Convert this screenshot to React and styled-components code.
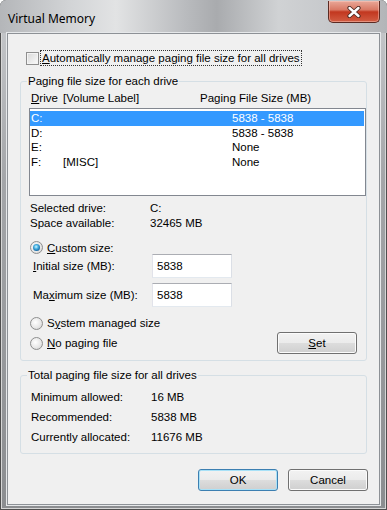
import React from "react";
import styled, { createGlobalStyle } from "styled-components";

const GlobalStyle = createGlobalStyle`
  html, body {
    margin: 0;
    padding: 0;
    background: #fff;
  }
  body {
    font-family: "Liberation Sans", Arial, sans-serif;
    font-size: 11.5px;
    color: #000;
  }
`;

const Window = styled.div`
  width: 387px;
  height: 510px;
  box-sizing: border-box;
  display: flex;
  flex-direction: column;
  padding: 0 7px 5px 7px;
  border-radius: 6px 6px 0 0;
  background: linear-gradient(to bottom, #c9cbce 0%, #a4a6a9 35%, #8b8d90 100%);
  box-shadow: inset 0 0 0 1px #4f4f4f, inset 0 0 0 2px #d6d6d6;
`;

const TitleBar = styled.div`
  height: 33px;
  margin: 0 -7px;
  padding: 0 7px;
  display: flex;
  justify-content: space-between;
  align-items: flex-start;
  border-radius: 6px 6px 0 0;
  background: linear-gradient(
    to right,
    #b4b6b9 0%,
    #d2d4d6 18%,
    #e2e3e4 30%,
    #b9bbbe 48%,
    #a9abae 56%,
    #d0d2d4 72%,
    #c6c8cb 86%,
    #b3b5b8 100%
  );
`;

const Title = styled.span`
  font-family: "Noto Sans", "Open Sans", sans-serif;
  font-size: 12px;
  padding: 6px 0 0 1px;
  line-height: 26px;
  color: #000;
`;

const CloseButton = styled.div`
  width: 52px;
  height: 22px;
  margin-top: 1px;
  box-sizing: border-box;
  border: 1px solid #5b2a22;
  border-top: none;
  border-radius: 0 0 5px 5px;
  background: linear-gradient(#e9a898 0%, #d97864 42%, #c2371f 52%, #d25d43 100%);
  box-shadow: inset 0 0 0 1px rgba(255, 210, 200, 0.45);
  display: flex;
  align-items: center;
  justify-content: center;
`;

const Client = styled.div`
  flex: 1;
  display: flex;
  flex-direction: column;
  background: #f0f0f0;
  border: 1px solid #8d9196;
  box-shadow: 0 0 0 1px #e6e8ea;
  padding: 16px 12px 0 12px;
`;

const CheckRow = styled.div`
  display: flex;
  align-items: center;
  gap: 2px;
  height: 16px;
  margin-left: 6px;
`;

const CheckBox = styled.span`
  width: 13px;
  height: 13px;
  box-sizing: border-box;
  border: 1px solid #8f8f8f;
  background: linear-gradient(135deg, #d8d8d8, #fbfbfb);
  box-shadow: inset 0 0 0 1px #f4f4f4;
`;

const FocusText = styled.span`
  outline: 1px dotted #333;
  padding: 0 1px;
  line-height: 14px;
`;

const Group = styled.fieldset`
  margin: ${(p) => p.$top}px 0 0 0;
  padding: 0 0 6px 8px;
  border: 1px solid #d5dfe5;
  border-radius: 3px;
  min-width: 0;
`;

const Legend = styled.legend`
  padding: 0 1px;
  margin-left: -2px;
  line-height: 14px;
`;

const ListHeader = styled.div`
  display: grid;
  grid-template-columns: 32px 137px 1fr;
  padding-left: 2px;
  margin-top: 3px;
  line-height: 14px;
`;

const ListBox = styled.div`
  margin-top: 3px;
  height: 88px;
  box-sizing: border-box;
  border: 1px solid #828790;
  background: #fff;
  padding: 2px 1px 0 0;
`;

const ListRow = styled.div`
  display: grid;
  grid-template-columns: 32px 169px 1fr;
  height: 14.5px;
  line-height: 14.5px;
  padding-left: 1px;
  background: ${(p) => (p.$selected ? "#3399ff" : "transparent")};
  color: ${(p) => (p.$selected ? "#fff" : "#000")};
`;

const InfoGrid = styled.div`
  display: grid;
  grid-template-columns: 120px 1fr;
  padding-left: ${(p) => p.$pad}px;
  margin-top: ${(p) => p.$top}px;
  line-height: ${(p) => p.$line}px;
`;

const RadioRow = styled.div`
  display: flex;
  align-items: center;
  gap: 4px;
  height: 13px;
  padding-left: 1px;
  margin-top: ${(p) => p.$top}px;
`;

const Radio = styled.span`
  width: 13px;
  height: 13px;
  box-sizing: border-box;
  border-radius: 50%;
  border: 1px solid #8e8f8f;
  background: radial-gradient(circle at 40% 40%, #ffffff 0%, #e8e8e8 55%, #cbcbcb 100%);
  display: flex;
  align-items: center;
  justify-content: center;
  &::after {
    content: "";
    display: ${(p) => (p.$checked ? "block" : "none")};
    width: 7px;
    height: 7px;
    border-radius: 50%;
    background: radial-gradient(circle at 45% 40%, #d2f4ff 0%, #49b3e3 35%, #176aa6 70%, #0d3f6b 100%);
  }
`;

const SizeRow = styled.div`
  display: flex;
  align-items: center;
  height: 24px;
  margin: ${(p) => p.$top}px 0 0 4px;
`;

const SizeLabel = styled.span`
  width: 119px;
`;

const TextBox = styled.input`
  width: 80px;
  height: 24px;
  box-sizing: border-box;
  margin: 0;
  padding: 0 0 0 4px;
  font: inherit;
  color: #000;
  background: #fff;
  border: 1px solid #abadb3;
  border-color: #abadb3 #dbdfe6 #e3e9ef #e2e3ea;
  outline: none;
`;

const BottomRow = styled.div`
  display: flex;
  align-items: center;
  justify-content: space-between;
  height: 22px;
  margin-top: 2.5px;
`;

const Button = styled.button`
  width: 80px;
  height: 22px;
  box-sizing: border-box;
  margin: 0;
  padding: 0;
  font: inherit;
  color: #000;
  border: 1px solid ${(p) => (p.$default ? "#3c7fb1" : "#707070")};
  border-radius: 3px;
  background: linear-gradient(#f2f2f2 0%, #ebebeb 49%, #dddddd 50%, #cfcfcf 100%);
  box-shadow: inset 0 0 0 1px ${(p) => (p.$default ? "#a8e1f7" : "#fbfbfb")};
  margin-right: ${(p) => p.$right || 0}px;
`;

const ButtonBar = styled.div`
  display: flex;
  justify-content: flex-end;
  gap: 10px;
  margin: 15px -1px 0 0;
`;

const Key = styled.u`
  text-decoration-thickness: 1px;
  text-underline-offset: 1px;
`;

const drives = [
  { d: "C:", label: "", size: "5838 - 5838", selected: true },
  { d: "D:", label: "", size: "5838 - 5838" },
  { d: "E:", label: "", size: "None" },
  { d: "F:", label: "[MISC]", size: "None" },
];

const CloseGlyph = () => (
  <svg width="14" height="12" viewBox="0 0 14 12">
    <path d="M2.5 2 L11.5 10 M11.5 2 L2.5 10" stroke="#4a2720" strokeWidth="4.2" strokeLinecap="round" />
    <path d="M2.5 2 L11.5 10 M11.5 2 L2.5 10" stroke="#ffffff" strokeWidth="2.4" strokeLinecap="round" />
  </svg>
);

export default function App() {
  return (
    <>
      <GlobalStyle />
      <Window>
        <TitleBar>
          <Title>Virtual Memory</Title>
          <CloseButton>
            <CloseGlyph />
          </CloseButton>
        </TitleBar>
        <Client>
          <CheckRow>
            <CheckBox />
            <FocusText>
              <Key>A</Key>utomatically manage paging file size for all drives
            </FocusText>
          </CheckRow>

          <Group $top={8}>
            <Legend>Paging file size for each drive</Legend>
            <ListHeader>
              <span>
                <Key>D</Key>rive
              </span>
              <span>[Volume Label]</span>
              <span>Paging File Size (MB)</span>
            </ListHeader>
            <ListBox>
              {drives.map((r) => (
                <ListRow key={r.d} $selected={r.selected}>
                  <span>{r.d}</span>
                  <span>{r.label}</span>
                  <span>{r.size}</span>
                </ListRow>
              ))}
            </ListBox>

            <InfoGrid $pad={1} $top={5} $line={15}>
              <span>Selected drive:</span>
              <span>C:</span>
              <span>Space available:</span>
              <span>32465 MB</span>
            </InfoGrid>

            <RadioRow $top={10}>
              <Radio $checked />
              <span>
                <Key>C</Key>ustom size:
              </span>
            </RadioRow>
            <SizeRow $top={0}>
              <SizeLabel>
                <Key>I</Key>nitial size (MB):
              </SizeLabel>
              <TextBox readOnly value="5838" />
            </SizeRow>
            <SizeRow $top={5}>
              <SizeLabel>
                Ma<Key>x</Key>imum size (MB):
              </SizeLabel>
              <TextBox readOnly value="5838" />
            </SizeRow>
            <RadioRow $top={9.5}>
              <Radio />
              <span>
                S<Key>y</Key>stem managed size
              </span>
            </RadioRow>
            <BottomRow>
              <RadioRow $top={0}>
                <Radio />
                <span>
                  <Key>N</Key>o paging file
                </span>
              </RadioRow>
              <Button $right={9}>
                <Key>S</Key>et
              </Button>
            </BottomRow>
          </Group>

          <Group $top={7}>
            <Legend>Total paging file size for all drives</Legend>
            <InfoGrid $pad={2} $top={5} $line={20}>
              <span>Minimum allowed:</span>
              <span>16 MB</span>
              <span>Recommended:</span>
              <span>5838 MB</span>
              <span>Currently allocated:</span>
              <span>11676 MB</span>
            </InfoGrid>
          </Group>

          <ButtonBar>
            <Button $default>OK</Button>
            <Button>Cancel</Button>
          </ButtonBar>
        </Client>
      </Window>
    </>
  );
}
